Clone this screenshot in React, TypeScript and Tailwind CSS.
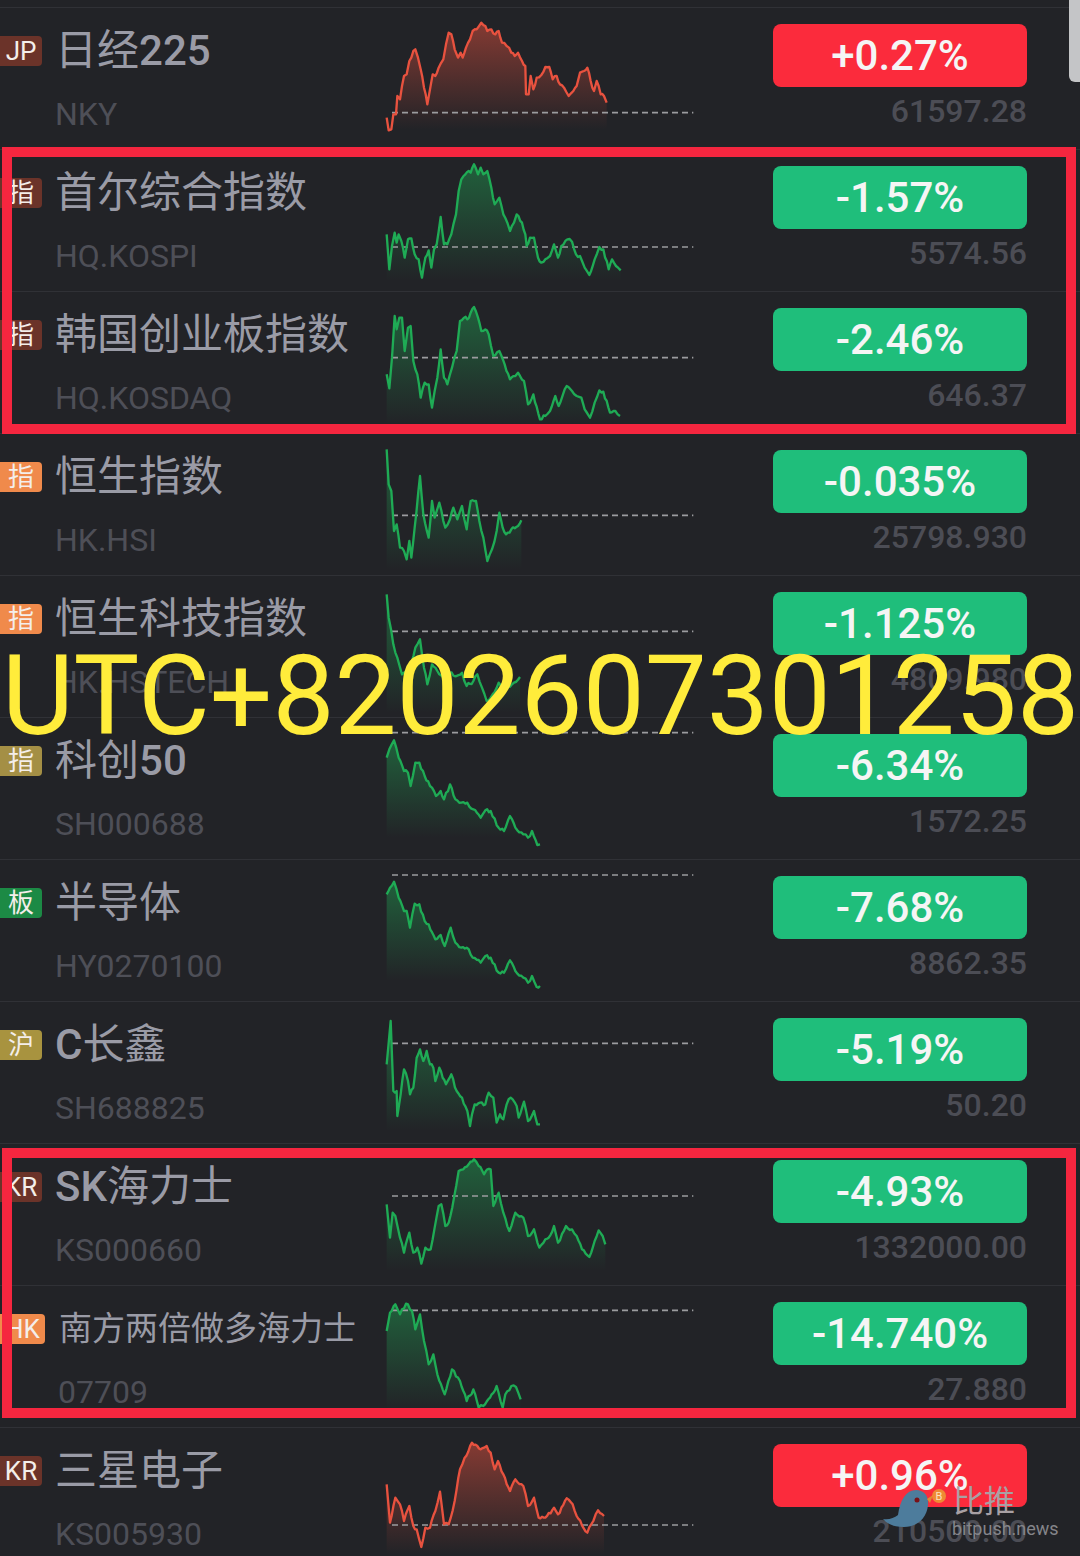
import type { ReactNode } from "react";

type Row = {
  tag: string;
  tagClass: string;
  name: ReactNode;
  nameClass?: string;
  code: string;
  codeClass?: string;
  change: string;
  price: string;
  // chart points, traced on a 3x grid of the 330px chart box
  top: number;
  dash: number;
  fillTop: number;
  fillBottom: number;
  points: string;
};

const up = "bg-[#fb2b3c]";
const down = "bg-[#1fbe7b]";

const rows: Row[] = [
  {
    tag: "JP",
    tagClass: "bg-[#6b3329]",
    name: <>日经<span className="font-medium">225</span></>,
    code: "NKY",
    change: "+0.27%",
    price: "61597.28",
    top: 21,
    dash: 335,
    fillTop: 65,
    fillBottom: 385,
    points:
      "20,350 26,388 34,385 40,340 48,340 52,285 60,295 66,255 72,225 80,220 88,180 100,150 106,145 114,170 122,205 132,260 142,310 150,265 158,220 166,225 176,200 190,175 198,130 206,95 214,100 224,145 234,170 242,155 248,170 258,140 270,115 278,90 290,85 304,65 316,75 322,90 334,85 346,100 356,90 366,125 380,135 394,155 404,165 414,155 426,180 436,195 438,280 446,280 452,225 460,265 470,230 484,222 496,198 508,198 518,235 530,225 540,250 552,260 566,285 580,270 590,255 600,215 612,210 622,200 632,240 642,270 650,240 662,280 672,285 680,305",
  },
  {
    tag: "指",
    tagClass: "bg-[#6b3329]",
    name: "首尔综合指数",
    code: "HQ.KOSPI",
    change: "-1.57%",
    price: "5574.56",
    top: 447,
    dash: 738,
    fillTop: 490,
    fillBottom: 840,
    points:
      "20,700 28,805 36,735 44,695 50,725 56,700 64,720 74,770 84,715 94,712 104,760 116,775 126,830 136,770 146,748 154,800 162,745 170,730 182,648 192,730 202,730 214,700 228,640 236,570 244,535 256,520 266,510 272,515 282,490 294,520 302,500 310,520 322,510 334,560 344,610 358,590 370,640 382,665 390,690 402,665 410,640 426,665 436,700 440,735 450,710 462,710 474,770 484,785 496,775 510,765 522,730 534,770 544,735 562,715 576,722 588,760 600,765 614,800 628,822 644,775 658,738 670,745 686,805 696,775 708,795 722,808",
  },
  {
    tag: "指",
    tagClass: "bg-[#6b3329]",
    name: "韩国创业板指数",
    code: "HQ.KOSDAQ",
    change: "-2.46%",
    price: "646.37",
    top: 873,
    dash: 1070,
    fillTop: 918,
    fillBottom: 1270,
    points:
      "20,1120 28,1162 36,1070 44,945 50,985 58,950 66,950 74,1050 84,980 92,975 100,1080 112,1120 122,1190 134,1145 146,1150 156,1220 164,1170 172,1130 182,1045 192,1130 202,1150 216,1100 230,1050 240,960 252,950 262,955 272,935 282,918 294,950 304,990 316,985 326,1000 340,1065 358,1050 374,1090 390,1135 406,1125 414,1115 432,1140 444,1210 460,1180 480,1255 496,1245 510,1230 526,1185 536,1215 560,1155 576,1170 590,1185 604,1190 614,1225 630,1250 644,1205 658,1168 670,1172 690,1235 706,1230 720,1245",
  },
  {
    tag: "指",
    tagClass: "bg-[#f08a4b]",
    name: "恒生指数",
    code: "HK.HSI",
    change: "-0.035%",
    price: "25798.930",
    top: -21,
    dash: 223,
    fillTop: 25,
    fillBottom: 385,
    points:
      "20,25 26,130 34,150 42,270 50,250 60,320 72,330 80,355 88,300 94,350 104,260 120,105 130,220 146,290 156,180 164,230 178,185 196,260 210,235 220,200 232,235 246,195 260,265 272,180 288,180 298,240 310,290 322,360 336,325 350,270 358,215 368,260 378,280 394,265 414,255 424,238",
  },
  {
    tag: "指",
    tagClass: "bg-[#f08a4b]",
    name: "恒生科技指数",
    code: "HK.HSTECH",
    change: "-1.125%",
    price: "4809.980",
    top: 405,
    dash: 571,
    fillTop: 460,
    fillBottom: 815,
    points:
      "20,460 26,530 40,610 52,650 66,700 90,690 106,620 120,595 132,680 142,730 156,670 172,690 190,710 210,695 230,705 246,695 260,735 280,720 292,700 306,740 320,780 338,760 356,725 372,740 396,730 420,708",
  },
  {
    tag: "指",
    tagClass: "bg-[#a48f45]",
    name: <>科创<span className="font-medium">50</span></>,
    code: "SH000688",
    change: "-6.34%",
    price: "1572.25",
    top: 831,
    dash: 875,
    fillTop: 898,
    fillBottom: 1190,
    points:
      "20,950 28,925 42,898 56,950 72,990 84,995 92,1035 106,965 118,965 134,1005 150,1035 168,1065 182,1050 192,1075 210,1030 226,1075 244,1085 262,1085 280,1105 302,1130 316,1108 332,1110 356,1160 372,1170 390,1125 406,1160 430,1180 444,1190 456,1170 472,1212 480,1210",
  },
  {
    tag: "板",
    tagClass: "bg-[#1c8a45]",
    name: "半导体",
    code: "HY0270100",
    change: "-7.68%",
    price: "8862.35",
    top: -3,
    dash: 42,
    fillTop: 62,
    fillBottom: 360,
    points:
      "20,100 30,80 42,62 56,110 72,150 80,150 90,200 104,128 118,130 134,180 146,190 166,235 182,222 194,255 212,200 226,245 244,260 260,260 278,290 302,305 316,285 332,290 356,335 372,335 390,298 406,330 430,350 444,365 456,345 470,378 480,375",
  },
  {
    tag: "沪",
    tagClass: "bg-[#a8933f]",
    name: <><span className="font-medium">C</span>长鑫</>,
    code: "SH688825",
    change: "-5.19%",
    price: "50.20",
    top: 423,
    dash: 547,
    fillTop: 480,
    fillBottom: 810,
    points:
      "20,610 32,480 40,690 50,690 52,765 62,700 72,625 84,660 90,700 100,680 110,590 120,565 130,600 140,570 150,610 160,620 166,660 178,620 198,670 214,640 230,690 246,710 262,750 270,795 276,760 284,730 300,725 316,730 326,695 340,710 350,785 360,760 370,775 380,730 392,710 410,735 416,770 432,722 444,780 462,750 472,790 480,790",
  },
  {
    tag: "KR",
    tagClass: "bg-[#6b3329]",
    name: <><span className="font-medium">SK</span>海力士</>,
    code: "KS000660",
    change: "-4.93%",
    price: "1332000.00",
    top: 9,
    dash: 165,
    fillTop: 55,
    fillBottom: 390,
    points:
      "20,190 30,290 38,215 46,225 60,290 72,335 88,275 100,335 112,320 124,368 136,320 152,325 164,260 176,195 184,190 196,255 206,245 222,170 236,90 250,85 266,70 282,55 296,75 312,100 322,85 332,85 340,195 356,155 370,215 388,270 406,215 430,230 444,285 462,265 478,320 496,295 506,290 522,255 534,305 558,255 576,265 590,285 606,325 628,348 644,300 656,268 668,285 676,310",
  },
  {
    tag: "HK",
    tagClass: "bg-[#f08a4b] w-[45px]",
    name: "南方两倍做多海力士",
    nameClass: "text-[33px] ml-[14px]",
    code: "07709",
    codeClass: "pl-[58px]",
    change: "-14.740%",
    price: "27.880",
    top: 435,
    dash: 508,
    fillTop: 488,
    fillBottom: 805,
    points:
      "20,570 30,515 46,490 60,520 78,488 96,510 106,565 120,520 132,600 146,670 160,640 172,700 194,760 216,685 240,720 260,780 280,745 296,800 310,795 330,770 350,735 368,800 376,760 394,735 408,738 422,775",
  },
  {
    tag: "KR",
    tagClass: "bg-[#6b3329]",
    name: "三星电子",
    code: "KS005930",
    change: "+0.96%",
    price: "210500.00",
    top: 861,
    dash: 1152,
    fillTop: 905,
    fillBottom: 1240,
    points:
      "20,1030 30,1145 46,1070 60,1090 72,1140 88,1095 100,1155 110,1165 124,1218 136,1160 150,1160 166,1110 180,1052 192,1150 206,1150 224,1080 240,985 254,950 276,905 292,915 302,925 320,915 332,935 344,985 354,960 370,1000 390,1050 406,1015 430,1035 444,1095 462,1070 476,1130 496,1130 522,1100 534,1120 560,1072 578,1090 590,1125 622,1175 640,1140 654,1108 672,1125",
  },
];

// the traced points are coarse: break long segments up with a small wobble
const roughen = (points: string) => {
  const pts = points.split(" ").map((p) => p.split(",").map(Number));
  const out: string[] = [];
  pts.forEach(([x, y], i) => {
    out.push(`${x},${y}`);
    const next = pts[i + 1];
    if (!next) return;
    const steps = Math.floor((next[0] - x) / 5);
    for (let s = 1; s < steps; s++) {
      const t = s / steps;
      const n = Math.sin((x + s) * 12.9898) * 43758.5453;
      const wobble = (n - Math.floor(n) - 0.5) * 11;
      out.push(`${x + (next[0] - x) * t},${y + (next[1] - y) * t + wobble}`);
    }
  });
  return out.join(" ");
};

const Spark = ({ row, id }: { row: Row; id: number }) => {
  const rising = row.change.startsWith("+");
  const line = rising ? "#e8523f" : "#1fab55";
  const first = row.points.split(" ")[0].split(",")[0];
  const last = row.points.split(" ").slice(-1)[0].split(",")[0];
  const points = roughen(row.points);
  const area = `${first},${row.fillBottom} ${points} ${last},${row.fillBottom}`;
  return (
    <svg
      width="330"
      height="142"
      viewBox={`0 ${row.top} 990 426`}
      className="shrink-0 overflow-visible"
    >
      <defs>
        <linearGradient
          id={`spark-${id}`}
          gradientUnits="userSpaceOnUse"
          x1="0"
          y1={row.fillTop}
          x2="0"
          y2={row.fillBottom}
        >
          <stop offset="0" stopColor={line} stopOpacity={rising ? 0.5 : 0.45} />
          <stop offset="1" stopColor={line} stopOpacity="0" />
        </linearGradient>
      </defs>
      <polygon points={area} fill={`url(#spark-${id})`} />
      <line
        x1="36"
        x2="940"
        y1={row.dash}
        y2={row.dash}
        stroke="#9b9c9f"
        strokeWidth="5"
        strokeDasharray="18 12"
      />
      <polyline
        points={points}
        fill="none"
        stroke={line}
        strokeWidth="7"
        strokeLinejoin="round"
      />
    </svg>
  );
};

const QuoteRow = ({ row, id }: { row: Row; id: number }) => (
  <div className="flex h-[142px] shrink-0 border-t border-[#303136]">
    <div className="w-[380px] shrink-0">
      <div className="flex h-[58px] items-center pt-[27px]">
        <span
          className={`flex h-[30px] w-[42px] items-center justify-center rounded-r-[4px] text-[26px] leading-none text-[#f4eeea] ${row.tagClass}`}
        >
          {row.tag}
        </span>
        <span className={row.nameClass ?? "ml-[13px] text-[42px] leading-none text-[#9a9ba6]"}>
          <span className="text-[#9a9ba6]">{row.name}</span>
        </span>
      </div>
      <div className={`mt-[28px] text-[32px] leading-[40px] text-[#4e4f57] ${row.codeClass ?? "pl-[55px]"}`}>
        {row.code}
      </div>
    </div>
    <Spark row={row} id={id} />
    <div className="ml-[63px] w-[254px] shrink-0 pt-[16px] text-right">
      <div
        className={`flex h-[63px] items-center justify-center rounded-[8px] text-[42px] font-medium leading-none text-[#f5f5f5] ${
          row.change.startsWith("+") ? up : down
        }`}
      >
        {row.change}
      </div>
      <div className="mt-[4px] text-[32px] font-medium leading-[40px] text-[#4c4d55]">
        {row.price}
      </div>
    </div>
  </div>
);

const Frame = ({ className }: { className: string }) => (
  <div className={`absolute left-[2px] w-[1074px] border-[10px] border-[#f5263f] ${className}`} />
);

export default function App() {
  return (
    <div className="relative h-[1556px] w-[1080px] overflow-hidden bg-[#222327] pt-[7px] font-['Roboto','Noto_Sans_CJK_SC',sans-serif]">
      {rows.map((row, i) => (
        <QuoteRow key={row.code} row={row} id={i} />
      ))}

      <div className="absolute right-0 top-0 h-[82px] w-[11px] rounded-bl-[6px] bg-[#c4c5c7]" />

      <Frame className="top-[147px] h-[287px]" />
      <Frame className="top-[1148px] h-[270px]" />

      <div className="absolute left-[2px] top-[632px] whitespace-nowrap text-[110.4px] leading-[130px] text-[#ffec3b]">
        UTC+8202607301258
      </div>

      {/* bitpush mark */}
      <svg width="70" height="50" viewBox="0 0 70 50" className="absolute left-[880px] top-[1486px]">
        <path
          d="M3 33 C9 34 14 32 18 29 C20 14 26 4 36 4 C44 4 49 10 48 19 C47 32 37 41 24 41 C14 41 7 38 3 33 Z"
          fill="#4d7c9c"
        />
        <path d="M47 13 L53 9 L50 17 Z" fill="#e08a30" />
        <circle cx="37" cy="14" r="2.5" fill="#7a1118" />
        <circle cx="59" cy="10" r="7" fill="#ee8b34" />
        <text x="59" y="14" textAnchor="middle" fontSize="11" fill="#fbe3c0">
          B
        </text>
      </svg>
      <div className="absolute left-[953px] top-[1484px] text-[31px] leading-[36px] text-[#a8a0a4]">比推</div>
      <div className="absolute left-[952px] top-[1518px] text-[18px] leading-[22px] text-[#85858a]">
        bitpush.news
      </div>
    </div>
  );
}
